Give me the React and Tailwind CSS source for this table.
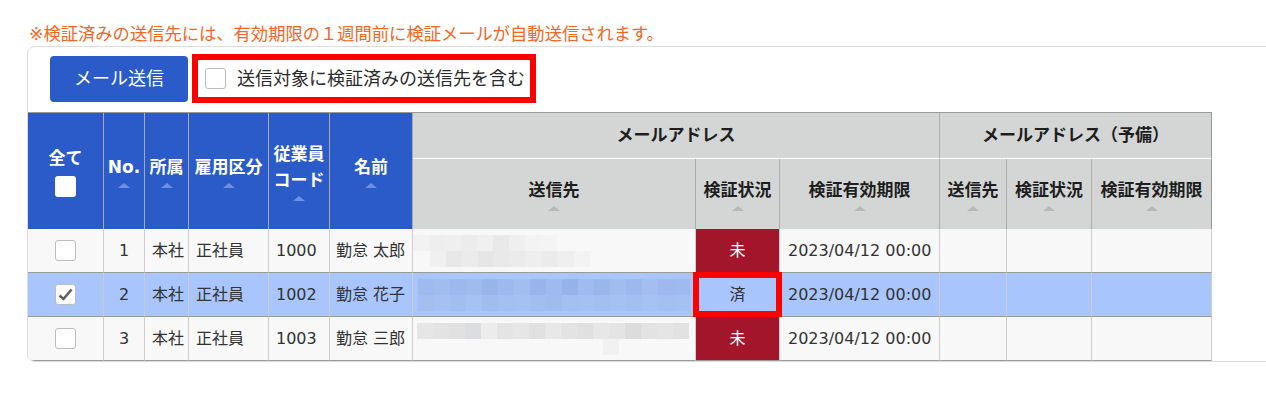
const font = "font-['DejaVu_Sans','Noto_Sans_CJK_JP',sans-serif]";

const rows = [
  {
    no: 1,
    code: "1000",
    name: "勤怠 太郎",
    status: "未",
    checked: false,
    selected: false,
    mosaic: [
      { pad: "pl-0", cells: ["bg-[#f2f2f2]", "bg-[#eeeeee]", "bg-[#efefef]", "bg-[#ececec]", "bg-[#f0f0f0]", "bg-[#e9e9e9]", "bg-[#efefef]", "bg-[#f3f3f3]", "bg-[#f4f4f4]"] },
      { pad: "pl-[17px]", cells: ["bg-[#f0f0f0]", "bg-[#e8e8e8]", "bg-[#ebebeb]", "bg-[#e6e6e6]", "bg-[#e9e9e9]", "bg-[#ebebeb]", "bg-[#eeeeee]", "bg-[#ebebeb]", "bg-[#efefef]", "bg-[#f3f3f3]"] },
    ],
  },
  {
    no: 2,
    code: "1002",
    name: "勤怠 花子",
    status: "済",
    checked: true,
    selected: true,
    mosaic: [
      { pad: "pl-[5px]", cells: ["bg-[#9ebaee]", "bg-[#a1bcef]", "bg-[#9cb8ec]", "bg-[#a0bbee]", "bg-[#98b5ea]", "bg-[#9db9ed]", "bg-[#a2bdf0]", "bg-[#98b4ea]", "bg-[#9fbaee]", "bg-[#95b2e9]", "bg-[#a0bbef]", "bg-[#9ab7ec]", "bg-[#a1bcef]", "bg-[#9cb8ed]", "bg-[#a3beef]", "bg-[#9db9ed]", "bg-[#9fbaee]"] },
      { pad: "pl-[5px]", cells: ["bg-[#a3beef]", "bg-[#a5c0f2]", "bg-[#a2bdf0]", "bg-[#a6c1f3]", "bg-[#a1bcef]", "bg-[#a4bff1]", "bg-[#a5c0f2]", "bg-[#a2bdf0]", "bg-[#a0bcef]", "bg-[#a4bff1]", "bg-[#a5c0f2]", "bg-[#a3bef0]", "bg-[#a5c0f2]", "bg-[#a3bef0]", "bg-[#a6c1f3]", "bg-[#a4bff1]", "bg-[#a5c0f2]"] },
    ],
  },
  {
    no: 3,
    code: "1003",
    name: "勤怠 三郎",
    status: "未",
    checked: false,
    selected: false,
    mosaic: [
      { pad: "pl-[4px]", cells: ["bg-[#e6e6e6]", "bg-[#e3e3e3]", "bg-[#e1e1e1]", "bg-[#dcdde0]", "bg-[#ececec]", "bg-[#e4e4e4]", "bg-[#e6e6e6]", "bg-[#e1e1e1]", "bg-[#e8e8e8]", "bg-[#e3e3e3]", "bg-[#e0e0e0]", "bg-[#e7e7e7]", "bg-[#e4e4e4]", "bg-[#dcdcdc]", "bg-[#e3e3e3]", "bg-[#e5e5e5]", "bg-[#e2e2e2]"] },
      { pad: "pl-[190px]", cells: ["bg-[#f1f1f1]"] },
    ],
  },
];

function SortMark({ tone }) {
  return (
    <div
      className={`mx-auto mt-[3px] h-0 w-0 border-x-[6px] border-b-[5px] border-x-transparent ${
        tone === "blue" ? "border-b-[#6d8fe0]" : "border-b-[#b6b9b9]"
      }`}
    />
  );
}

function BlueHead({ children, sort = true }) {
  return (
    <th
      rowSpan={2}
      className="border-r border-[#a9a9a9] bg-[#2a5bc8] p-0 text-center align-middle text-[17px] font-bold leading-[26px] text-white"
    >
      {children}
      {sort && <SortMark tone="blue" />}
    </th>
  );
}

function GrayHead({ children, last }) {
  return (
    <th
      className={`h-[70px] border-r bg-[#d4d6d6] p-0 text-center align-middle text-[17px] font-bold leading-[26px] text-[#1e1e1e] ${
        last ? "border-[#999]" : "border-[#adadad]"
      }`}
    >
      {children}
      <SortMark tone="gray" />
    </th>
  );
}

function Box({ checked, white, inline }) {
  return (
    <span
      className={`flex h-[21px] w-[21px] shrink-0 items-center justify-center rounded-[3px] bg-white ${
        white ? "" : "border border-[#bdbdbd]"
      } ${inline ? "" : "mx-auto"}`}
    >
      {checked && (
        <svg width="15" height="13" viewBox="0 0 15 13">
          <path d="M1.5 7.5 L5.5 11 L13.5 1.5" fill="none" stroke="#5f5f5f" strokeWidth="2.6" strokeLinejoin="round" />
        </svg>
      )}
    </span>
  );
}

function Mosaic({ bands }) {
  return (
    <div className="flex flex-col">
      {bands.map((band, i) => (
        <div key={i} className={`flex ${band.pad}`}>
          {band.cells.map((c, j) => (
            <div key={j} className={`h-[16px] w-[16px] ${c}`} />
          ))}
        </div>
      ))}
    </div>
  );
}

export default function App() {
  const td = "h-[44px] border-r border-b border-[#cdcdcd] border-b-[#9a9a9a] p-0 align-middle";
  return (
    <div className={`h-[393px] w-[1266px] overflow-hidden bg-white ${font} text-[#333]`}>
      <p className="pl-[29px] pt-[22px] text-[17.3px] leading-[24px] text-[#f5661f]">
        ※検証済みの送信先には、有効期限の１週間前に検証メールが自動送信されます。
      </p>

      <div className="ml-[27px] w-[1260px] overflow-hidden rounded-[8px] border border-[#dddddd]">
        <div className="flex items-center gap-[4px] pl-[22px] pt-[7px] pb-[9px]">
          <button className="h-[46px] w-[138px] rounded-[4px] bg-[#2a5bc8] text-[18px] leading-none text-white">
            メール送信
          </button>
          <div className="flex h-[49px] w-[344px] items-center gap-[11px] border-[6px] border-[#ff0000] bg-white pl-[7px]">
            <Box inline />
            <span className="whitespace-nowrap text-[18px] leading-none text-[#2b2b2b]">
              送信対象に検証済みの送信先を含む
            </span>
          </div>
        </div>

        <table className="w-[1184px] table-fixed border-separate border-spacing-0 border-t border-[#9a9a9a]">
          <colgroup>
            <col className="w-[76px]" />
            <col className="w-[41px]" />
            <col className="w-[44px]" />
            <col className="w-[80px]" />
            <col className="w-[61px]" />
            <col className="w-[83px]" />
            <col className="w-[283px]" />
            <col className="w-[84px]" />
            <col className="w-[160px]" />
            <col className="w-[67px]" />
            <col className="w-[85px]" />
            <col className="w-[120px]" />
          </colgroup>
          <thead>
            <tr>
              <BlueHead sort={false}>
                <div className="mb-[5px]">全て</div>
                <Box white />
              </BlueHead>
              <BlueHead>No.</BlueHead>
              <BlueHead>所属</BlueHead>
              <BlueHead>雇用区分</BlueHead>
              <BlueHead>
                従業員
                <br />
                コード
              </BlueHead>
              <BlueHead>名前</BlueHead>
              <th
                colSpan={3}
                className="h-[46px] border-r border-b border-[#adadad] border-b-white bg-[#d4d6d6] p-0 text-center text-[17px] font-bold text-[#1e1e1e]"
              >
                メールアドレス
              </th>
              <th
                colSpan={3}
                className="h-[46px] border-r border-b border-[#999] border-b-white bg-[#d4d6d6] p-0 text-center text-[17px] font-bold text-[#1e1e1e]"
              >
                メールアドレス（予備）
              </th>
            </tr>
            <tr>
              <GrayHead>送信先</GrayHead>
              <GrayHead>検証状況</GrayHead>
              <GrayHead>検証有効期限</GrayHead>
              <GrayHead>送信先</GrayHead>
              <GrayHead>検証状況</GrayHead>
              <GrayHead last>検証有効期限</GrayHead>
            </tr>
          </thead>
          <tbody className="text-[16px] leading-[22px]">
            {rows.map((r) => {
              const bg = r.selected ? "bg-[#a8c6fd]" : "bg-[#f8f8f8]";
              return (
                <tr key={r.no} className={bg}>
                  <td className={td}>
                    <Box checked={r.checked} />
                  </td>
                  <td className={`${td} text-center`}>{r.no}</td>
                  <td className={`${td} pl-[7px]`}>本社</td>
                  <td className={`${td} pl-[7px]`}>正社員</td>
                  <td className={`${td} pl-[7px]`}>{r.code}</td>
                  <td className={`${td} pl-[6px] whitespace-nowrap`}>{r.name}</td>
                  <td className={td}>
                    <Mosaic bands={r.mosaic} />
                  </td>
                  {r.status === "未" ? (
                    <td className={`${td} bg-[#a3152a] text-center text-white`}>未</td>
                  ) : (
                    <td className={`${td} relative text-center`}>
                      済
                      <span className="absolute -top-[1px] -right-[3px] -bottom-[1px] -left-[3px] border-[6px] border-[#ff0000]" />
                    </td>
                  )}
                  <td className={`${td} pl-[8px] whitespace-nowrap`}>2023/04/12 00:00</td>
                  <td className={td} />
                  <td className={td} />
                  <td className={`${td} border-r-[#cdcdcd]`} />
                </tr>
              );
            })}
          </tbody>
        </table>
      </div>
    </div>
  );
}
